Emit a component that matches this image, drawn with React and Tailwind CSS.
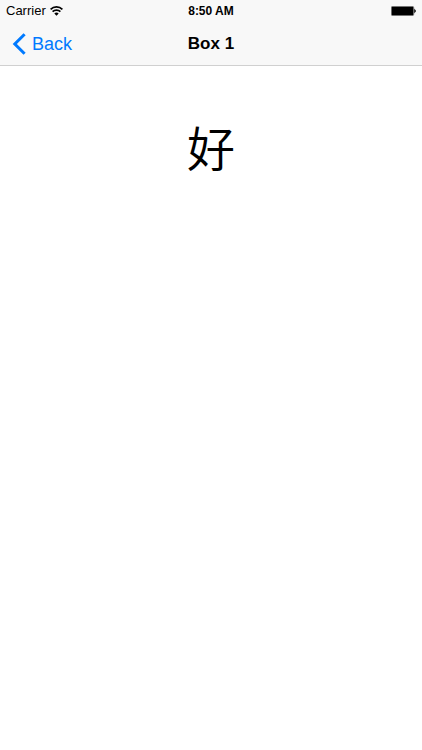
import React from 'react';

function WifiIcon() {
  return (
    <svg className="w-[13px] h-[10px]" viewBox="0 0 13 10" fill="none" stroke="black" strokeWidth="1.7" aria-hidden="true">
      <path d="M0.6 3.3a8.4 8.4 0 0 1 11.8 0" />
      <path d="M2.6 5.7a5.5 5.5 0 0 1 7.8 0" />
      <path d="M4.3 7.5a3.1 3.1 0 0 1 4.4 0L6.5 9.7z" fill="black" stroke="none" />
    </svg>
  );
}

function BatteryIcon() {
  return (
    <svg className="w-[25px] h-[10px]" viewBox="0 0 25 10" aria-hidden="true">
      <rect x="0.25" y="0.25" width="22.5" height="9.5" rx="1.6" fill="none" stroke="black" strokeWidth="0.5" />
      <rect x="0.7" y="0.7" width="21.6" height="8.6" rx="1" fill="black" />
      <path d="M23.4 3.3a1.8 1.8 0 0 1 0 3.4z" fill="black" stroke="black" strokeWidth="0.4" />
    </svg>
  );
}

function StatusBar() {
  return (
    <div className="grid grid-cols-3 items-center h-[22px] px-[6px] text-[12px] leading-[22px]">
      <div className="flex items-center gap-1">
        <span className="text-[13px]">Carrier</span>
        <WifiIcon />
      </div>
      <span className="text-center font-bold">8:50 AM</span>
      <div className="flex justify-end">
        <BatteryIcon />
      </div>
    </div>
  );
}

function NavBar({ title }) {
  return (
    <nav className="grid grid-cols-3 items-center h-[43px] px-3">
      <button type="button" className="flex items-center justify-self-start gap-[6px] text-[18px] leading-[22px] text-[#007aff]">
        <svg className="w-[14px] h-[22px]" viewBox="0 0 14 22" fill="none" stroke="currentColor" strokeWidth="3" aria-hidden="true">
          <path d="M12.6 1.2L2.8 11l9.8 9.8" />
        </svg>
        Back
      </button>
      <h1 className="text-center text-[17px] leading-[22px] font-bold">{title}</h1>
    </nav>
  );
}

export default function App() {
  return (
    <div className="min-h-screen bg-white text-black font-['Liberation_Sans',sans-serif]">
      <header className="bg-[#f8f8f8] border-b border-[#d0d0d0]">
        <StatusBar />
        <NavBar title="Box 1" />
      </header>
      <main className="pt-[52px] text-center">
        <p lang="zh" className="text-[48px] leading-[56px] font-[350] font-['Noto_Sans_CJK_SC',sans-serif]">好</p>
      </main>
    </div>
  );
}
